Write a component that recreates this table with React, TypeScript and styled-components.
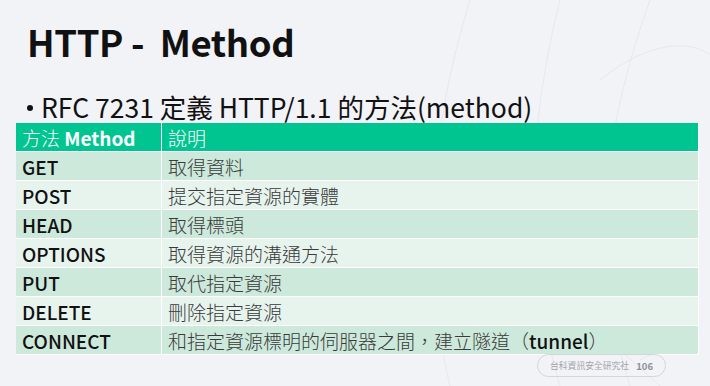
import React from "react";
import styled, { createGlobalStyle } from "styled-components";

const Global = createGlobalStyle`
  html, body { margin: 0; padding: 0; }
  body {
    width: 710px;
    height: 386px;
    overflow: hidden;
    background: #f2f3f7;
    font-family: "Noto Sans CJK TC", "Noto Sans", sans-serif;
  }
`;

const Slide = styled.div`
  position: relative;
  width: 710px;
  height: 386px;
  box-sizing: border-box;
  padding: 16px 12px 0 16px;
  display: flex;
  flex-direction: column;
  overflow: hidden;
`;

const Deco = styled.svg`
  position: absolute;
  inset: 0;
  pointer-events: none;
`;

const Title = styled.h1`
  position: relative;
  margin: 0 0 0 11px;
  font-size: 36.5px;
  line-height: 52px;
  font-weight: 700;
  color: #111;
  letter-spacing: -0.4px;
  white-space: pre;
`;

const Bullet = styled.div`
  position: relative;
  margin: 21px 0 0 11px;
  display: flex;
  align-items: center;
  gap: 8px;
  height: 34px;
  font-size: 26.5px;
  font-weight: 400;
  color: #111;
  white-space: pre;
`;

const Dot = styled.span`
  width: 6px;
  height: 6px;
  border-radius: 50%;
  background: #111;
  margin-top: 3px;
`;

const Table = styled.div`
  position: relative;
  width: 682px;
  display: grid;
  grid-template-columns: 145px 1fr;
  row-gap: 1px;
  column-gap: 1px;
  background: #ffffff;
  border: 1px solid #ffffff;
  border-left: none;
  border-top: none;
`;

const Cell = styled.div<{ $tone: "head" | "odd" | "even"; $method?: boolean }>`
  height: 28px;
  display: flex;
  align-items: center;
  padding-left: 6px;
  font-size: 19px;
  white-space: pre;
  background: ${(p) =>
    p.$tone === "head" ? "#01c590" : p.$tone === "odd" ? "#cde9dc" : "#e7f4ee"};
  color: ${(p) => (p.$tone === "head" ? "#ffffff" : p.$method ? "#111" : "#3a3a3a")};
  font-weight: ${(p) => (p.$method ? 500 : 300)};
`;

const Bold = styled.span<{ $w?: number }>`
  font-weight: ${(p) => p.$w ?? 700};
  color: ${(p) => (p.$w ? "#111" : "inherit")};
`;

const Footer = styled.div`
  position: relative;
  align-self: flex-end;
  margin: -1px 32px 0 0;
  width: 129px;
  height: 23px;
  box-sizing: border-box;
  border: 1px solid #d3d5db;
  border-radius: 12px;
  display: flex;
  align-items: center;
  justify-content: center;
  gap: 7px;
  font-size: 8.8px;
  color: #a2a4aa;
`;

const PageNo = styled.span`
  font-weight: 700;
  font-size: 9.5px;
  color: #8f9197;
`;

const rows: [string, React.ReactNode][] = [
  ["GET", "取得資料"],
  ["POST", "提交指定資源的實體"],
  ["HEAD", "取得標頭"],
  ["OPTIONS", "取得資源的溝通方法"],
  ["PUT", "取代指定資源"],
  ["DELETE", "刪除指定資源"],
  ["CONNECT", <>和指定資源標明的伺服器之間，建立隧道（<Bold $w={500}>tunnel</Bold>）</>],
];

export default function App() {
  return (
    <>
      <Global />
      <Slide>
        <Deco width="710" height="386" viewBox="0 0 710 386">
          <g fill="none" stroke="#e2e4ea" strokeWidth="0.8">
            <path d="M560 0 C 530 120, 520 250, 560 386" />
            <path d="M650 0 C 600 140, 590 260, 630 386" />
            <path d="M470 0 C 430 130, 420 260, 450 386" />
            <path d="M600 80 C 650 40, 690 40, 710 55" />
            <path d="M640 360 L 700 330" />
            <path d="M660 386 L 620 350" />
          </g>
        </Deco>
        <Title>{"HTTP -  Method"}</Title>
        <Bullet>
          <Dot />
          <span>RFC 7231 定義 HTTP/1.1 的方法(method)</span>
        </Bullet>
        <Table>
          <Cell $tone="head">
            <span>方法 <Bold>Method</Bold></span>
          </Cell>
          <Cell $tone="head">說明</Cell>
          {rows.map(([m, d], i) => (
            <React.Fragment key={m}>
              <Cell $tone={i % 2 === 0 ? "odd" : "even"} $method>
                {m}
              </Cell>
              <Cell $tone={i % 2 === 0 ? "odd" : "even"}>{d}</Cell>
            </React.Fragment>
          ))}
        </Table>
        <Footer>
          <span>台科資訊安全研究社</span>
          <PageNo>106</PageNo>
        </Footer>
      </Slide>
    </>
  );
}
